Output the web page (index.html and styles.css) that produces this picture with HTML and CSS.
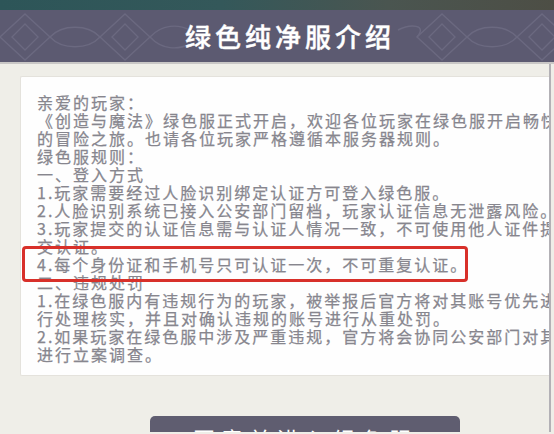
FILE: index.html
```html
<!DOCTYPE html>
<html lang="zh-CN">
<head>
<meta charset="utf-8">
<title>绿色纯净服介绍</title>
<link rel="stylesheet" href="styles.css">
</head>
<body>
<div class="topstrip"></div>
<header class="header">
  <svg class="pattern" width="554" height="54" viewBox="0 0 554 54" aria-hidden="true">
    <g fill="none" stroke="#6b6980" stroke-width="1.4">
      <path d="M25 4 L50 27 L25 50 L0 27 Z"/>
      <path d="M25 14 L38 27 L25 40 L12 27 Z"/>
      <path d="M50 27 C62 14 88 14 100 27"/>
      <path d="M50 27 C62 40 88 40 100 27"/>
      <path d="M125 4 L150 27 L125 50 L100 27 Z"/>
      <path d="M125 14 L138 27 L125 40 L112 27 Z"/>
      <path d="M150 27 C162 14 178 14 190 20"/>
      <path d="M150 27 C162 40 178 40 190 34"/>
      <path d="M398 20 C410 14 428 14 417 27"/>
      <path d="M442 4 L467 27 L442 50 L417 27 Z"/>
      <path d="M442 14 L455 27 L442 40 L429 27 Z"/>
      <path d="M467 27 C479 14 505 14 517 27"/>
      <path d="M467 27 C479 40 505 40 517 27"/>
      <path d="M542 4 L567 27 L542 50 L517 27 Z"/>
      <path d="M542 14 L555 27 L542 40 L529 27 Z"/>
    </g>
  </svg>
  <h1 class="title">绿色纯净服介绍</h1>
</header>
<main class="panel">
  <section class="notice">
    <div class="lines">
      <p>亲爱的玩家：</p>
      <p>《创造与魔法》绿色服正式开启，欢迎各位玩家在绿色服开启畅快</p>
      <p>的冒险之旅。也请各位玩家严格遵循本服务器规则。</p>
      <p>绿色服规则：</p>
      <p>一、登入方式</p>
      <p>1.玩家需要经过人脸识别绑定认证方可登入绿色服。</p>
      <p>2.人脸识别系统已接入公安部门留档，玩家认证信息无泄露风险。</p>
      <p>3.玩家提交的认证信息需与认证人情况一致，不可使用他人证件提</p>
      <p>交认证。</p>
      <p>4.每个身份证和手机号只可认证一次，不可重复认证。</p>
      <p>二、违规处罚</p>
      <p>1.在绿色服内有违规行为的玩家，被举报后官方将对其账号优先进</p>
      <p>行处理核实，并且对确认违规的账号进行从重处罚。</p>
      <p>2.如果玩家在绿色服中涉及严重违规，官方将会协同公安部门对其</p>
      <p>进行立案调查。</p>
    </div>
    <div class="highlight"></div>
  </section>
  <div class="actions">
    <button class="btn">同意并进入绿色服</button>
  </div>
</main>
</body>
</html>
```

FILE: styles.css
```css
* { box-sizing: border-box; }
html, body {
  margin: 0;
  padding: 0;
  width: 554px;
  height: 434px;
  overflow: hidden;
}
body {
  background: #efeee8;
  font-family: "Noto Sans CJK SC", "Noto Sans", sans-serif;
}
.topstrip {
  height: 10px;
  background: linear-gradient(90deg, #2d5558 0%, #34585a 40%, #4a5550 70%, #4d4e45 100%);
}
.header {
  position: relative;
  height: 54px;
  background: #5c5a71;
  border-bottom: 2px solid #c9c7c6;
  display: flex;
  align-items: center;
  justify-content: center;
  padding-left: 26px;
  overflow: hidden;
}
.pattern {
  position: absolute;
  left: 0;
  top: 0;
}
.title {
  position: relative;
  margin: 0;
  color: #ffffff;
  font-size: 26px;
  font-weight: 500;
  letter-spacing: 4px;
  line-height: 1;
  -webkit-text-stroke: 0.4px #ffffff;
}
.panel {
  height: 368px;
  margin-right: 3px;
  border-right: 2px solid #b3b1b6;
  padding: 12px 0 0 20px;
  display: flex;
  flex-direction: column;
  overflow: hidden;
}
.notice {
  position: relative;
  flex: none;
  height: 300px;
  background: #fefefe;
  border: 1px solid #e4e2dc;
  border-right: none;
  border-radius: 2px 0 0 2px;
}
.lines {
  height: 100%;
  overflow: hidden;
  padding: 16px 0 0 16px;
  color: #87868e;
  font-size: 16px;
  line-height: 18px;
  letter-spacing: 2px;
  white-space: nowrap;
  -webkit-text-stroke: 0.25px #87868e;
}
.lines p {
  margin: 0;
}
.highlight {
  position: absolute;
  left: 1px;
  top: 169px;
  width: 446px;
  height: 36px;
  border: 3px solid #d8302a;
  border-radius: 4px;
}
.actions {
  flex: 1;
  min-height: 0;
  overflow: hidden;
  padding: 40px 0 0 130px;
}
.btn {
  width: 310px;
  height: 44px;
  border: none;
  border-radius: 5px;
  background: #5f5d70;
  color: #ffffff;
  font-family: "Noto Sans CJK SC", "Noto Sans", sans-serif;
  font-size: 22px;
  letter-spacing: 6px;
  padding: 6px 0 0 0;
  display: flex;
  justify-content: center;
  align-items: flex-start;
}
```
